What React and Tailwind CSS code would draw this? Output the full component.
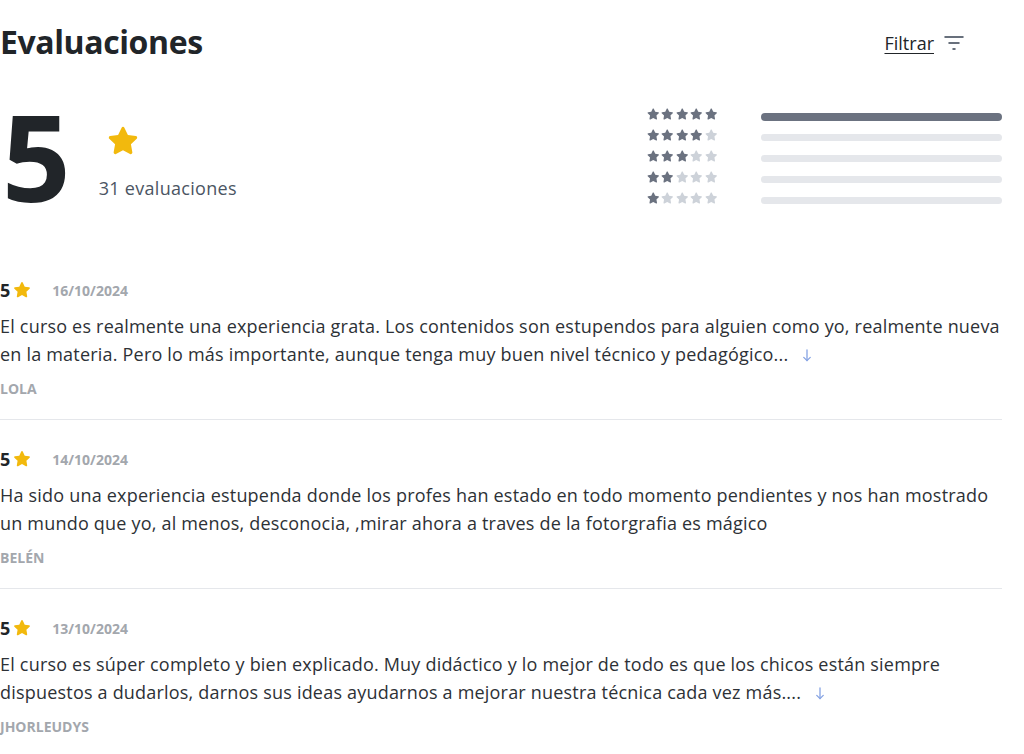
import React from "react";

const Star = ({ className }) => (
  <svg viewBox="0 0 24 24" className={className} fill="currentColor">
    <path d="M12 2.5c.4 0 .75.23.92.6l2.35 4.9 5.3.72c.4.06.73.34.85.72.12.38.02.8-.27 1.08l-3.87 3.72.95 5.3c.07.4-.09.8-.42 1.03-.33.24-.76.27-1.12.08L12 18.1l-4.69 2.55c-.36.2-.8.16-1.12-.08a1.04 1.04 0 0 1-.42-1.030l.95-5.3-3.87-3.72a1.04 1.04 0 0 1-.27-1.08c.12-.38.45-.66.85-.72l5.3-.72 2.35-4.9c.17-.37.52-.6.92-.6z" />
  </svg>
);

const FilterIcon = () => (
  <svg viewBox="0 0 20 16" className="w-[20px] h-[16px]" fill="none" stroke="#374151" strokeWidth="1.5" strokeLinecap="round">
    <line x1="1" y1="2" x2="19" y2="2" />
    <line x1="5" y1="8" x2="15" y2="8" />
    <line x1="9" y1="14" x2="11" y2="14" />
  </svg>
);

const DownArrow = () => (
  <svg viewBox="0 0 10 14" className="inline-block w-[10px] h-[13px] ml-[14px] align-[-1px]" fill="none" stroke="#86a3e3" strokeWidth="1.4" strokeLinecap="round" strokeLinejoin="round">
    <line x1="5" y1="1" x2="5" y2="12.5" />
    <polyline points="1.5,9 5,12.5 8.5,9" />
  </svg>
);

const rows = [5, 4, 3, 2, 1];

const reviews = [
  {
    date: "16/10/2024",
    text: "El curso es realmente una experiencia grata. Los contenidos son estupendos para alguien como yo, realmente nueva en la materia. Pero lo más importante, aunque tenga muy buen nivel técnico y pedagógico...",
    more: true,
    name: "LOLA",
  },
  {
    date: "14/10/2024",
    text: "Ha sido una experiencia estupenda donde los profes han estado en todo momento pendientes y nos han mostrado un mundo que yo, al menos, desconocia, ,mirar ahora a traves de la fotorgrafia es mágico",
    more: false,
    name: "BELÉN",
  },
  {
    date: "13/10/2024",
    text: "El curso es súper completo y bien explicado. Muy didáctico y lo mejor de todo es que los chicos están siempre dispuestos a dudarlos, darnos sus ideas ayudarnos a mejorar nuestra técnica cada vez más....",
    more: true,
    name: "JHORLEUDYS",
  },
];

export default function App() {
  return (
    <div className="w-[1024px] h-[754px] overflow-hidden bg-white text-[#212529]" style={{ fontFamily: "'Open Sans', 'Noto Sans', sans-serif" }}>
      <div className="w-[1002px]">
        <div className="flex justify-between pt-[22px] h-[84px] items-start">
          <h1 className="text-[32px] font-bold leading-[40px] tracking-[-0.4px]">Evaluaciones</h1>
          <div className="flex items-center gap-[10px] mr-[38px] mt-[10px]">
            <span className="text-[18px] leading-[22px] underline underline-offset-[3px]">Filtrar</span>
            <FilterIcon />
          </div>
        </div>

        <div className="flex items-start justify-between h-[196px]">
          <div className="flex items-start">
            <div className="text-[120px] font-bold leading-[120px] mt-[12px] ml-[2px]">5</div>
            <div className="flex flex-col ml-[28px] pt-[39px]">
              <Star className="w-[36px] h-[36px] text-[#f2b90d] ml-[6px]" />
              <span className="text-[18px] leading-[22px] tracking-[0.3px] text-[#4b5563] mt-[18px]">31 evaluaciones</span>
            </div>
          </div>
          <div className="flex items-start gap-[43px] pt-[20px]">
            <div className="flex flex-col -ml-[2px]">
              {rows.map((n) => (
                <div key={n} className="flex h-[21px] items-center">
                  {[1, 2, 3, 4, 5].map((i) => (
                    <Star key={i} className={`w-[14.5px] h-[14.5px] ${i <= n ? "text-[#6b7280]" : "text-[#cdd2d9]"}`} />
                  ))}
                </div>
              ))}
            </div>
            <div className="flex flex-col w-[241px] pt-[2px]">
              {rows.map((n) => (
                <div key={n} className="flex h-[21px] items-center">
                  <div className={`w-full rounded-full ${n === 5 ? "h-[8px] bg-[#6b7280]" : "h-[7px] bg-[#e5e7eb]"}`} />
                </div>
              ))}
            </div>
          </div>
        </div>

        <div>
          {reviews.map((r, idx) => (
            <div key={idx} className={`pb-[21px] ${idx < reviews.length - 1 ? "border-b border-[#e5e7eb] mb-[29px]" : ""}`}>
              <div className="flex items-center h-[20px]">
                <span className="text-[18px] font-bold leading-[20px]">5</span>
                <Star className="w-[20px] h-[20px] text-[#f2b90d] ml-[2px]" />
                <span className="ml-[20px] text-[14px] font-bold text-[#a3a7ad]">{r.date}</span>
              </div>
              <p className="mt-[12px] text-[18px] leading-[28px] tracking-[0.2px] text-[#2d3136]">
                {r.text}
                {r.more && <DownArrow />}
              </p>
              <div className="mt-[12px] text-[14px] leading-[18px] font-bold text-[#a3a7ad]">{r.name}</div>
            </div>
          ))}
        </div>
      </div>
    </div>
  );
}
